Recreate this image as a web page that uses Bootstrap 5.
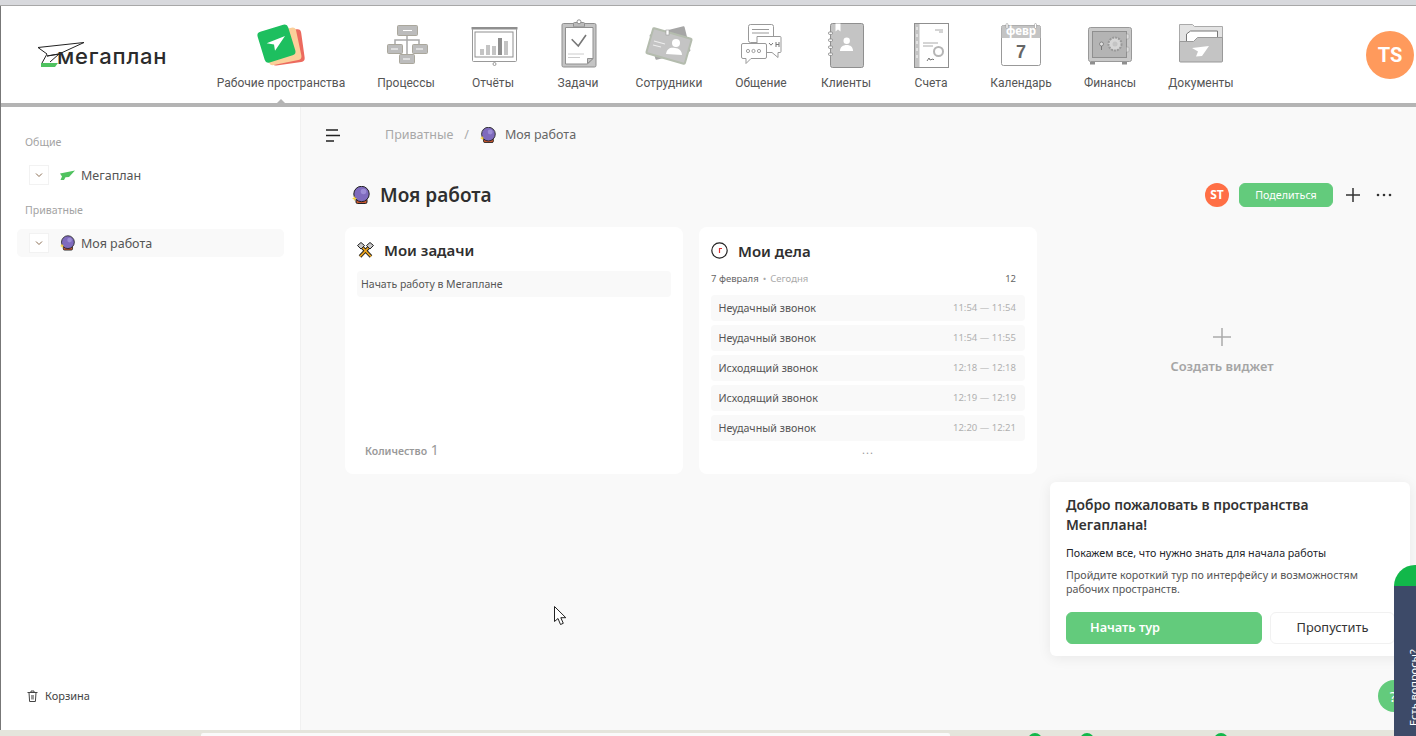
<!DOCTYPE html>
<html lang="ru">

<head>
    <meta charset="utf-8">
    <title>Мегаплан</title>
    <link href="https://cdn.jsdelivr.net/npm/bootstrap@5.3.0/dist/css/bootstrap.min.css" rel="stylesheet">
    <style>
        html, body { height: 100%; }
        body {
            height: 736px;
            overflow: hidden;
            background: #fff;
            font-family: "Noto Sans", "Liberation Sans", sans-serif;
            color: #555;
        }

        /* top */
        .top-strip { height: 6px; background: #d8d9dd; border-bottom: 1px solid #a8a8a8; flex: none; }
        .app-shell { border-left: 1px solid #777; min-height: 0; }
        .mp-header { height: 97px; flex: none; }
        .mp-logo { width: 200px; flex: none; padding: 35px 0 0 36px; }
        .mp-logo svg { display: block; }
        .logo-word { font-family: Inter, sans-serif; font-weight: 500; font-size: 22px; letter-spacing: .8px; fill: #2b2b2b; }
        .mp-nav {
            display: grid;
            grid-template-columns: 160px 90px 84px 86px 96px 88px 82px 88px 92px 86px 96px;
            padding-top: 13px;
        }
        .nav-cell { text-align: center; text-decoration: none; }
        .nav-cell svg { display: block; margin: 0 auto 7px; }
        .nav-cell span {
            display: block;
            font-family: Roboto, sans-serif;
            font-size: 12px;
            line-height: 14px;
            color: #555;
            white-space: nowrap;
        }
        .user-circle {
            width: 48px;
            height: 48px;
            margin: 25px 2px 0 auto;
            background: #ff9a5c;
            font: 700 20px Roboto, sans-serif;
        }
        .head-bar { height: 4px; background: #b4b4b4; flex: none; position: relative; }
        .head-bar::before {
            content: "";
            position: absolute;
            left: 276px;
            top: -4px;
            border: 4px solid transparent;
            border-top: 0;
            border-bottom-color: #b4b4b4;
        }

        /* sidebar */
        .side-panel {
            width: 300px;
            flex: none;
            padding: 27px 16px 26px;
            background: #fff;
            border-right: 1px solid #f1f1f1;
        }
        .side-head { font-size: 10.6px; line-height: 16px; color: #a3a3a3; padding-left: 8px; }
        .side-row { height: 28px; margin-top: 11px; padding-left: 12px; margin-bottom: 13px; font-size: 12.5px; color: #555; border-radius: 5px; }
        .side-row.is-active { background: #f9f9f9; }
        .side-row .row-text { padding-top: 2px; }
        .chev-box {
            width: 20px;
            height: 20px;
            margin-right: 11px;
            background: #fff;
            border: 1px solid #f2f2f2;
        }
        .side-row .row-ico { margin-right: 6px; }
        .trash-link { font-size: 11px; line-height: 16px; color: #444; padding-left: 10px; gap: 7px; }

        /* main */
        .work-area { background: #f9f9f9; min-width: 0; }
        .crumb-row { height: 54px; flex: none; padding: 2px 0 0 25px; }
        .crumb-row .breadcrumb { margin: 0 0 0 45px; font-size: 12.5px; --bs-breadcrumb-divider-color: #aaa; --bs-breadcrumb-item-padding-x: 11px; }
        .crumb-row .breadcrumb-item { color: #666; }
        .crumb-row .breadcrumb-item a { color: #a8a8a8; text-decoration: none; }
        .crumb-row .breadcrumb-item svg { margin-right: 9px; }
        .title-row { height: 24px; margin: 22px 24px 20px 51px; flex: none; }
        .title-row h1 { font-size: 19px; font-weight: 600; color: #2f2f2f; margin: 0 0 0 10px; }
        .st-circle { width: 24px; height: 24px; background: #ff6f45; font-size: 12px; font-weight: 700; }
        .share-btn {
            --bs-btn-bg: #63cb7c;
            --bs-btn-border-color: #63cb7c;
            --bs-btn-color: #fff;
            --bs-btn-hover-bg: #55bd6e;
            --bs-btn-hover-border-color: #55bd6e;
            --bs-btn-hover-color: #fff;
            --bs-btn-padding-y: 0;
            --bs-btn-font-size: 10.7px;
            width: 94px;
            height: 24px;
            padding-top: 1px;
            margin: 0 13px 0 10px;
        }
        .widget-grid {
            display: grid;
            grid-template-columns: repeat(3, 338px);
            gap: 16px;
            margin-left: 44px;
            height: 247px;
            flex: none;
        }
        .widget-card { border: 0; border-radius: 8px; padding: 15px 12px 0; }
        .widget-card h2 { font-size: 15px; font-weight: 600; color: #2f2f2f; margin: 0 0 0 10px; line-height: 16px; }
        .task-line { height: 26px; margin-top: 13px; background: #f9f9f9; border-radius: 4px; padding-left: 4px; font-size: 10.5px; line-height: 26px; color: #555; }
        .task-count { margin-top: auto; padding: 0 0 14px 8px; font-size: 10.5px; font-weight: 600; color: #999; }
        .task-count b { font-size: 14px; font-weight: 400; margin-left: 1px; }
        .date-row { height: 14px; margin: 13px 9px 9px 0; font-size: 9.5px; color: #666; }
        .date-row .soft { color: #aaa; }
        .call-line { height: 26px; margin-bottom: 4px; padding: 0 9px 0 7.500px; background: #f9f9f9; border-radius: 4px; font-size: 10.7px; color: #555; }
        .call-line time { font-size: 9.5px; color: #b0b0b0; }
        .more-dots { margin-top: 1px; font-size: 11px; line-height: 8px; color: #999; letter-spacing: 1px; }
        .add-widget { color: #a5a5a5; font-size: 12.9px; font-weight: 600; padding-top: 3px; gap: 11px; }

        /* bottom */
        .bottom-strip { height: 6px; background: #e5e5dc; flex: none; position: relative; overflow: hidden; }
        .bottom-strip i { position: absolute; border-radius: 50%; width: 14px; height: 14px; top: 3px; background: #12b84a; }
        .bottom-strip .strip-field { left: 201px; width: 749px; top: 3px; height: 8px; background: #fafafa; border-radius: 2px; }

        /* over the content */
        .welcome-box {
            position: absolute;
            left: 1050px;
            top: 482px;
            width: 360px;
            height: 174px;
            padding: 13px 16px;
            background: #fff;
            border-radius: 6px;
            box-shadow: 0 2px 14px rgba(0, 0, 0, .07);
        }
        .welcome-box h3 { font-size: 13.85px; line-height: 20px; font-weight: 600; color: #333; margin: 0 40px 11px 0; }
        .welcome-box p { margin: 0; font-size: 10.7px; line-height: 14px; }
        .start-btn {
            --bs-btn-bg: #63cb7c;
            --bs-btn-border-color: #63cb7c;
            --bs-btn-color: #fff;
            --bs-btn-hover-bg: #55bd6e;
            --bs-btn-hover-border-color: #55bd6e;
            --bs-btn-hover-color: #fff;
            --bs-btn-font-size: 12.7px;
            --bs-btn-font-weight: 600;
            width: 196px;
            height: 32px;
            padding: 0 0 0 23px;
            text-align: left;
            flex: none;
        }
        .skip-btn {
            --bs-btn-bg: #fff;
            --bs-btn-border-color: #f1f1f1;
            --bs-btn-color: #333;
            --bs-btn-font-size: 12.8px;
            width: 125px;
            height: 32px;
            padding: 0;
            flex: none;
        }
        .help-dot {
            position: absolute;
            left: 1378px;
            top: 680px;
            width: 32px;
            height: 32px;
            padding-right: 2px;
            background: #63cb7c;
            color: #fff;
            font-size: 15px;
        }
        .help-side { position: absolute; left: 1394px; top: 586px; width: 22px; height: 150px; background: #3d4a68; overflow: hidden; }
        .help-side span {
            position: absolute;
            left: 27px;
            bottom: 10px;
            transform-origin: 0 100%;
            transform: rotate(-90deg);
            font-size: 11px;
            line-height: 14px;
            color: #fff;
            white-space: nowrap;
        }
        .help-cap { position: absolute; left: 1394px; top: 565px; width: 22px; height: 21px; background: #12b84a; border-top-left-radius: 22px; }
        .mouse-arrow { position: absolute; left: 554px; top: 606px; }
    </style>
</head>

<body class="d-flex flex-column">

    <svg class="d-none">
        <symbol id="ball" viewBox="0 0 18 18">
            <rect x="4" y="12.500" width="11" height="5" rx="1.500" fill="#c9552c" stroke="#222" stroke-width="1"/>
            <circle cx="9.500" cy="8" r="7.700" fill="#7f6bbd" stroke="#222" stroke-width="1"/>
            <circle cx="11.500" cy="5.500" r="2.800" fill="#9d8dd6"/>
            <path d="M2.500 10l.8 1.700 1.700.8-1.700.8-.8 1.700-.8-1.700-1.700-.8 1.700-.8z" fill="#f7d23e"/>
        </symbol>
        <symbol id="chev" viewBox="0 0 10 6">
            <path d="M2 1.500l3 3 3-3" fill="none" stroke="#8a6d52" stroke-width="1"/>
        </symbol>
    </svg>

    <div class="top-strip"></div>

    <div class="app-shell d-flex flex-column flex-grow-1">
        <header class="mp-header d-flex">
            <a class="mp-logo" href="#">
                <svg width="132" height="30" viewBox="0 0 132 30">
                    <path d="M1 6.500L47 1.500 22 13 10 15 22 13 13 21M1 6.500l9 6.500-5 9" fill="none" stroke="#222" stroke-width="1"/>
                    <path d="M4 22h17l-3 4H4z" fill="#4fc25f"/>
                    <text class="logo-word" x="20" y="22.500">мегаплан</text>
                </svg>
            </a>

            <nav class="mp-nav">
                <a class="nav-cell" href="#">
                    <svg width="56" height="50" viewBox="0 0 56 50">
                        <rect x="17" y="12" width="33" height="33" rx="4" fill="#ec6a5e" transform="rotate(-8 33 28)"/>
                        <rect x="13" y="11" width="33" height="33" rx="4" fill="#fbcf9a" transform="rotate(-12 29 27)"/>
                        <rect x="7.500" y="8.500" width="32" height="32" rx="4" fill="#1dbf5f" transform="rotate(-17 23.700 24.700)"/>
                        <path d="M13.700 24.300L32 17 22 31.700 21 25.500z" fill="#fff"/>
                    </svg>
                    <span>Рабочие пространства</span>
                </a>
                <a class="nav-cell" href="#">
                    <svg width="56" height="50" viewBox="0 0 56 50">
                        <path d="M29 16v19M17 25v-4h24v4" fill="none" stroke="#a9a9a9" stroke-width="1.500"/>
                        <g fill="#bcbcbc" stroke="#aaa79c">
                            <rect x="19.500" y="6.500" width="20" height="10" rx="1"/>
                            <rect x="9.500" y="25.500" width="15" height="9" rx="1"/>
                            <rect x="34.500" y="25.500" width="15" height="9" rx="1"/>
                            <rect x="21.500" y="35.500" width="15" height="9" rx="1"/>
                        </g>
                        <path d="M25 11.500h9M13 30h7M38 30h7M25 40h7" stroke="#fff"/>
                    </svg>
                    <span>Процессы</span>
                </a>
                <a class="nav-cell" href="#">
                    <svg width="56" height="50" viewBox="0 0 56 50">
                        <rect x="7.500" y="9.500" width="44" height="33" rx="1" fill="#fff" stroke="#999"/>
                        <rect x="6.500" y="8" width="46" height="2.500" fill="#8f8f8f"/>
                        <rect x="10" y="13" width="38" height="25" fill="#fff" stroke="#8f8f8f"/>
                        <g fill="#c4c4c4">
                            <rect x="15" y="30" width="4" height="6"/>
                            <rect x="21" y="26" width="4" height="10"/>
                            <rect x="27" y="27" width="4" height="9"/>
                            <rect x="39" y="22" width="4" height="14"/>
                        </g>
                        <rect x="33" y="19" width="4" height="17" fill="#8f8f8f"/>
                        <circle cx="29.500" cy="45" r="1.500" fill="#fff" stroke="#999"/>
                    </svg>
                    <span>Отчёты</span>
                </a>
                <a class="nav-cell" href="#">
                    <svg width="56" height="50" viewBox="0 0 56 50">
                        <rect x="12" y="4.500" width="34" height="43.500" rx="1.500" fill="#c4c4c4" stroke="#8f8f8f"/>
                        <path d="M15.500 8.500h27.500v31l-5.500 5.500H15.500z" fill="#fff" stroke="#8f8f8f"/>
                        <path d="M37.500 44.500v-5h5.500z" fill="#c4c4c4" stroke="#8f8f8f"/>
                        <rect x="23.500" y="3.500" width="11" height="4.500" rx="1" fill="#bbb" stroke="#8f8f8f"/>
                        <circle cx="29" cy="2.800" r="2" fill="#fff" stroke="#8f8f8f"/>
                        <path d="M21.700 20.300l6.600 6.700L36 16" fill="none" stroke="#777" stroke-width="1.600"/>
                        <path d="M18 35h16M18 38.500h12" stroke="#ccc"/>
                    </svg>
                    <span>Задачи</span>
                </a>
                <a class="nav-cell" href="#">
                    <svg width="56" height="50" viewBox="0 0 56 50">
                        <rect x="11" y="11" width="36" height="26" rx="1" fill="#a6a6a6" transform="rotate(-14 29 24)"/>
                        <rect x="8" y="14" width="40" height="26" rx="1" fill="#c4c4c4" stroke="#b4bcae" stroke-width="2" transform="rotate(16 28 27)"/>
                        <circle cx="35" cy="24" r="4" fill="#fff"/>
                        <path d="M25 35c1-6 5-7 9-6 4 0 7 3 7 7z" fill="#fff"/>
                        <path d="M13 22l11 3M12 26l8 2" stroke="#eee" stroke-width="1.200"/>
                        <rect x="25" y="11" width="3" height="5" fill="#fff" stroke="#999" stroke-width=".6"/>
                    </svg>
                    <span>Сотрудники</span>
                </a>
                <a class="nav-cell" href="#">
                    <svg width="56" height="50" viewBox="0 0 56 50">
                        <g fill="#fff" stroke="#999">
                            <rect x="15.500" y="5.500" width="25" height="18" rx="2"/>
                            <path d="M24 17.500h23a1 1 0 0 1 1 1v14a1 1 0 0 1-1 1h-2v5l-6-5H24z"/>
                            <path d="M10 24.500h22a1.500 1.500 0 0 1 1.500 1.500v12a1.500 1.500 0 0 1-1.500 1.500H18l-5 5v-5h-3A1.500 1.500 0 0 1 8.500 38V26A1.500 1.500 0 0 1 10 24.500z"/>
                        </g>
                        <path d="M19 10.500h17M19 14h17" stroke="#999"/>
                        <circle cx="15" cy="32" r="1.600" fill="none" stroke="#888" stroke-width=".8"/>
                        <circle cx="20.500" cy="32" r="1.600" fill="none" stroke="#888" stroke-width=".8"/>
                        <circle cx="26" cy="32" r="1.600" fill="none" stroke="#888" stroke-width=".8"/>
                        <path d="M36 24l2 2.200 2-2.200M43 23v5M46 23v5M43 25.500h3" fill="none" stroke="#777"/>
                    </svg>
                    <span>Общение</span>
                </a>
                <a class="nav-cell" href="#">
                    <svg width="56" height="50" viewBox="0 0 56 50">
                        <rect x="12.500" y="4.500" width="33" height="44" rx="2" fill="#c4c4c4" stroke="#8f8f8f"/>
                        <path d="M17.500 4.500h5v8l-2.500-2-2.500 2z" fill="#fff"/>
                        <g fill="#fff" stroke="#8f8f8f">
                            <rect x="10.500" y="13" width="4" height="2.400" rx="1"/>
                            <rect x="10.500" y="20" width="4" height="2.400" rx="1"/>
                            <rect x="10.500" y="27" width="4" height="2.400" rx="1"/>
                            <rect x="10.500" y="34" width="4" height="2.400" rx="1"/>
                        </g>
                        <circle cx="28.700" cy="21.700" r="3.200" fill="#fff"/>
                        <path d="M22 32c0-4 3-6 6.700-6s6.300 2 6.300 6z" fill="#fff"/>
                    </svg>
                    <span>Клиенты</span>
                </a>
                <a class="nav-cell" href="#">
                    <svg width="56" height="50" viewBox="0 0 56 50">
                        <rect x="11.500" y="4.500" width="34" height="44" fill="#fff" stroke="#8f8f8f"/>
                        <rect x="12" y="5" width="4.500" height="43" fill="#c4c4c4"/>
                        <path d="M14 8v3M14 15v3M14 22v3M14 29v3M14 36v3" stroke="#fff"/>
                        <path d="M32 11h8M36 13h4M20 24h15M20 27h10" stroke="#aaa"/>
                        <circle cx="35.500" cy="32.500" r="4.500" fill="none" stroke="#b5b5b5" stroke-width="2"/>
                        <path d="M24 42l2-3 1 2 3-1 1 1" fill="none" stroke="#777"/>
                    </svg>
                    <span>Счета</span>
                </a>
                <a class="nav-cell" href="#">
                    <svg width="56" height="50" viewBox="0 0 56 50">
                        <rect x="8.500" y="6.500" width="39" height="40" rx="2" fill="#fff" stroke="#999"/>
                        <path d="M8.500 19V8.500a2 2 0 0 1 2-2h35a2 2 0 0 1 2 2V19z" fill="#c4c4c4"/>
                        <rect x="13" y="4.500" width="2" height="5" rx="1" fill="#fff" stroke="#999" stroke-width=".6"/>
                        <rect x="41.500" y="4.500" width="2" height="5" rx="1" fill="#fff" stroke="#999" stroke-width=".6"/>
                        <text x="28" y="16" text-anchor="middle" font-family="Noto Sans, sans-serif" font-weight="700" font-size="11.500" fill="#fff">февр</text>
                        <text x="28" y="39" text-anchor="middle" font-family="Liberation Sans, sans-serif" font-weight="700" font-size="18" fill="#666">7</text>
                    </svg>
                    <span>Календарь</span>
                </a>
                <a class="nav-cell" href="#">
                    <svg width="56" height="50" viewBox="0 0 56 50">
                        <rect x="8" y="43" width="5" height="2.500" fill="#8f8f8f"/>
                        <rect x="40" y="43" width="5" height="2.500" fill="#8f8f8f"/>
                        <rect x="6.500" y="8.500" width="43" height="34" rx="2" fill="#c9c9c9" stroke="#999"/>
                        <rect x="10.500" y="12.500" width="34" height="26" fill="#b4b4b4" stroke="#8f8f8f"/>
                        <circle cx="33" cy="25" r="6.500" fill="#d6d6d6" stroke="#999" stroke-dasharray="2 1" stroke-width="2"/>
                        <circle cx="33" cy="25" r="2.500" fill="#c4c4c4"/>
                        <circle cx="19.500" cy="25" r="2" fill="#e2e2e2" stroke="#777" stroke-width=".8"/>
                        <path d="M19.500 27v4" stroke="#777"/>
                        <rect x="44.500" y="15" width="2.500" height="5" rx="1" fill="#ddd" stroke="#999" stroke-width=".5"/>
                        <rect x="44.500" y="28" width="2.500" height="5" rx="1" fill="#ddd" stroke="#999" stroke-width=".5"/>
                    </svg>
                    <span>Финансы</span>
                </a>
                <a class="nav-cell" href="#">
                    <svg width="56" height="50" viewBox="0 0 56 50">
                        <path d="M6.500 42V5.500h13l2 2h28V42z" fill="#e3e3e3" stroke="#aaa"/>
                        <path d="M13.500 24v-9l4-3h27v12z" fill="#fff" stroke="#777"/>
                        <path d="M6.500 42V22.500h14l4-4h25V42a1 1 0 0 1-1 1H7.500a1 1 0 0 1-1-1z" fill="#c4c4c4" stroke="#999"/>
                        <path d="M19 29l17-2-7 10-6 .5 2-5z" fill="#fff"/>
                    </svg>
                    <span>Документы</span>
                </a>
            </nav>

            <div class="user-circle rounded-circle text-white d-flex align-items-center justify-content-center">TS</div>
        </header>
        <div class="head-bar"></div>

        <div class="d-flex flex-grow-1" style="min-height:0">
            <aside class="side-panel d-flex flex-column">
                <div class="side-head">Общие</div>
                <div class="side-row d-flex align-items-center">
                    <span class="chev-box d-flex align-items-center justify-content-center"><svg width="10" height="6"><use href="#chev"/></svg></span>
                    <svg class="row-ico" width="15" height="10" viewBox="0 0 15 10"><path d="M0 3.500L15 .500 9 7 5.500 7.200 4 10 .500 10l1.500-3.500z" fill="#4fc25f"/></svg>
                    <span class="row-text">Мегаплан</span>
                </div>
                <div class="side-head">Приватные</div>
                <div class="side-row is-active d-flex align-items-center">
                    <span class="chev-box d-flex align-items-center justify-content-center"><svg width="10" height="6"><use href="#chev"/></svg></span>
                    <svg class="row-ico" width="15" height="16"><use href="#ball"/></svg>
                    <span class="row-text">Моя работа</span>
                </div>
                <div class="trash-link mt-auto d-flex align-items-center">
                    <svg width="11" height="12" viewBox="0 0 11 12" fill="none" stroke="#444"><path d="M.500 2.500h10M4 2.500V1h3v1.500M2 2.500l.6 9h5.800l.6-9"/><path d="M4 5h3v4.500H4z" fill="#999" stroke="none"/></svg>
                    <span>Корзина</span>
                </div>
            </aside>

            <main class="work-area flex-grow-1 d-flex flex-column">
                <div class="crumb-row d-flex align-items-center">
                    <svg width="14" height="13" viewBox="0 0 14 13"><path d="M0 1h12M0 6.500h14M0 12h8" stroke="#222" stroke-width="1.600"/></svg>
                    <ol class="breadcrumb align-items-center">
                        <li class="breadcrumb-item"><a href="#">Приватные</a></li>
                        <li class="breadcrumb-item active d-flex align-items-center"><svg width="16" height="16"><use href="#ball"/></svg><span>Моя работа</span></li>
                    </ol>
                </div>

                <div class="title-row d-flex align-items-center">
                    <svg width="18" height="18"><use href="#ball"/></svg>
                    <h1>Моя работа</h1>
                    <div class="st-circle rounded-circle text-white d-flex align-items-center justify-content-center ms-auto">ST</div>
                    <button class="btn share-btn">Поделиться</button>
                    <svg width="14" height="14" viewBox="0 0 14 14"><path d="M7 0v14M0 7h14" stroke="#333" stroke-width="1.500"/></svg>
                    <svg class="ms-3" width="16" height="4" viewBox="0 0 16 4" fill="#333"><circle cx="2" cy="2" r="1.300"/><circle cx="8" cy="2" r="1.300"/><circle cx="14" cy="2" r="1.300"/></svg>
                </div>

                <div class="widget-grid">
                    <section class="card widget-card">
                        <div class="d-flex align-items-center">
                            <svg width="17" height="16" viewBox="0 0 17 16">
                                <path d="M3 14.500L13 4M14 14.500L4 4" stroke="#222" stroke-width="3.500"/>
                                <path d="M3 14.500L13 4M14 14.500L4 4" stroke="#eda41c" stroke-width="1.800"/>
                                <path d="M.500 3.500l3.500-3 3.500 3-3.500 3.500zM9.500 3.500l3.500-3 3.500 3-3.500 3.500z" fill="#c9c9c9" stroke="#222"/>
                            </svg>
                            <h2>Мои задачи</h2>
                        </div>
                        <div class="task-line">Начать работу в Мегаплане</div>
                        <div class="task-count">Количество <b>1</b></div>
                    </section>

                    <section class="card widget-card">
                        <div class="d-flex align-items-center">
                            <svg width="17" height="17" viewBox="0 0 17 17"><circle cx="8.500" cy="8.500" r="7.700" fill="#fff" stroke="#222" stroke-width="1.200"/><path d="M8.500 11V6.500h2.500" fill="none" stroke="#d33" stroke-width="1.200"/></svg>
                            <h2>Мои дела</h2>
                        </div>
                        <div class="date-row d-flex align-items-center">
                            <span>7 февраля</span><span class="soft mx-1">•</span><span class="soft">Сегодня</span><span class="ms-auto">12</span>
                        </div>
                        <div class="call-line d-flex align-items-center justify-content-between"><span>Неудачный звонок</span><time>11:54 — 11:54</time></div>
                        <div class="call-line d-flex align-items-center justify-content-between"><span>Неудачный звонок</span><time>11:54 — 11:55</time></div>
                        <div class="call-line d-flex align-items-center justify-content-between"><span>Исходящий звонок</span><time>12:18 — 12:18</time></div>
                        <div class="call-line d-flex align-items-center justify-content-between"><span>Исходящий звонок</span><time>12:19 — 12:19</time></div>
                        <div class="call-line d-flex align-items-center justify-content-between"><span>Неудачный звонок</span><time>12:20 — 12:21</time></div>
                        <div class="more-dots text-center">...</div>
                    </section>

                    <div class="add-widget d-flex flex-column align-items-center justify-content-center">
                        <svg width="18" height="18" viewBox="0 0 18 18"><path d="M9 0v18M0 9h18" stroke="#aaa" stroke-width="1.500"/></svg>
                        <span>Создать виджет</span>
                    </div>
                </div>
            </main>
        </div>
    </div>

    <div class="bottom-strip">
        <i class="strip-field"></i>
        <i style="left:1028px"></i>
        <i style="left:1080px"></i>
        <i style="left:1214px"></i>
    </div>

    <svg class="mouse-arrow" width="14" height="20" viewBox="0 0 14 20"><path d="M.500.500v15l3.500-3 2.500 6 2.800-1.200-2.500-5.600h5z" fill="#fff" stroke="#222"/></svg>

    <div class="welcome-box">
        <h3>Добро пожаловать в пространства Мегаплана!</h3>
        <p class="mb-2 text-dark">Покажем все, что нужно знать для начала работы</p>
        <p>Пройдите короткий тур по интерфейсу и возможностям рабочих пространств.</p>
        <div class="d-flex gap-2 mt-3">
            <button class="btn start-btn">Начать тур</button>
            <button class="btn skip-btn">Пропустить</button>
        </div>
    </div>

    <div class="help-dot rounded-circle d-flex align-items-center justify-content-center">?</div>
    <div class="help-cap"></div>
    <div class="help-side"><span>Есть вопросы?</span></div>

    <script src="https://cdn.jsdelivr.net/npm/bootstrap@5.3.0/dist/js/bootstrap.bundle.min.js"></script>
</body>

</html>
